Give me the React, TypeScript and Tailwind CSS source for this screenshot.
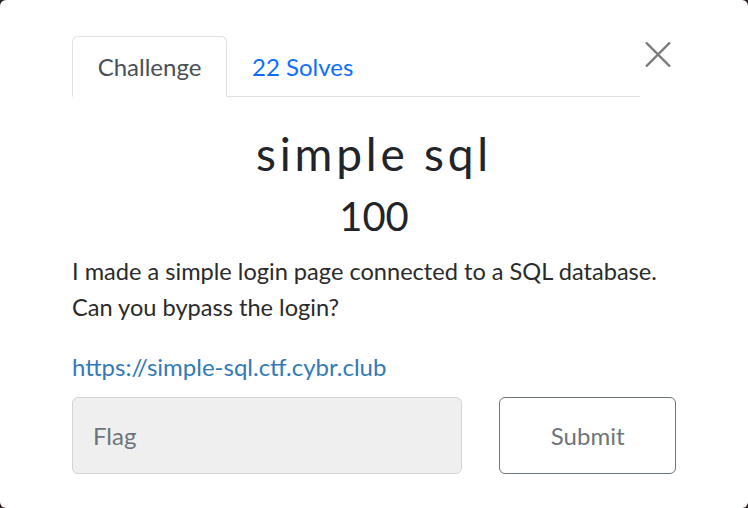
import React, { useState } from 'react';

export default function App() {
  const [flag, setFlag] = useState('');
  const [tab, setTab] = useState<'challenge' | 'solves'>('challenge');

  return (
    <div className="w-[748px] h-[508px] bg-[#2a2020]">
      <div className="h-full bg-white rounded-[6px] px-[72px] pt-[36px] font-['Lato','Noto_Sans',sans-serif] text-[#212529]">
        {/* header: tabs + close */}
        <div className="flex items-start">
          <nav className="w-[568px] flex border-b border-[#dee2e6]">
            <button
              onClick={() => setTab('challenge')}
              className={
                tab === 'challenge'
                  ? 'w-[155px] h-[61px] -mb-px bg-white border border-[#dee2e6] border-b-white rounded-t-[6px] text-[24px] text-[#495057]'
                  : 'w-[155px] h-[61px] -mb-px border border-transparent text-[24px] text-[#0d6efd]'
              }
            >
              Challenge
            </button>
            <button
              onClick={() => setTab('solves')}
              className={
                tab === 'solves'
                  ? 'h-[61px] px-[24px] -mb-px bg-white border border-[#dee2e6] border-b-white rounded-t-[6px] text-[24px] text-[#495057]'
                  : 'h-[61px] px-[24px] -mb-px border border-transparent text-[24px] text-[#0d6efd]'
              }
            >
              22 Solves
            </button>
          </nav>
          <button aria-label="Close" className="ml-[5px] mt-[6px] w-[26px] h-[25px] flex items-center justify-center">
            <svg width="26" height="25" viewBox="0 0 26 25" aria-hidden="true">
              <path d="M1 0.5 L25 24.5 M25 0.5 L1 24.5" stroke="#7a7a7a" strokeWidth="2.4" />
            </svg>
          </button>
        </div>

        {/* body */}
        <h3 className="mt-[30px] text-center text-[46px] leading-[54px] tracking-[3.8px]">simple sql</h3>
        <h4 className="mt-[10px] text-center text-[40px] leading-[50px]">100</h4>

        <p className="mt-[12px] text-[23.6px] leading-[36px] text-[#2b2b2b]">
          I made a simple login page connected to a SQL database.
          <br />
          Can you bypass the login?
        </p>

        <a href="#" className="block mt-[24px] text-[24px] leading-[36px] text-[#337ab7]">
          https://simple-sql.ctf.cybr.club
        </a>

        <form
          className="mt-[12px] flex gap-[37px]"
          onSubmit={(e) => e.preventDefault()}
        >
          <input
            value={flag}
            onChange={(e) => setFlag(e.target.value)}
            placeholder="Flag"
            className="w-[391px] h-[77px] px-[20px] bg-[#efefef] border border-[#d4d4d4] rounded-[6px] text-[24px] text-[#495057] placeholder-[#6c757d] outline-none"
          />
          <button
            type="submit"
            className="w-[177px] h-[77px] border border-[#6c757d] rounded-[6px] text-[24px] text-[#6c757d]"
          >
            Submit
          </button>
        </form>
      </div>
    </div>
  );
}
